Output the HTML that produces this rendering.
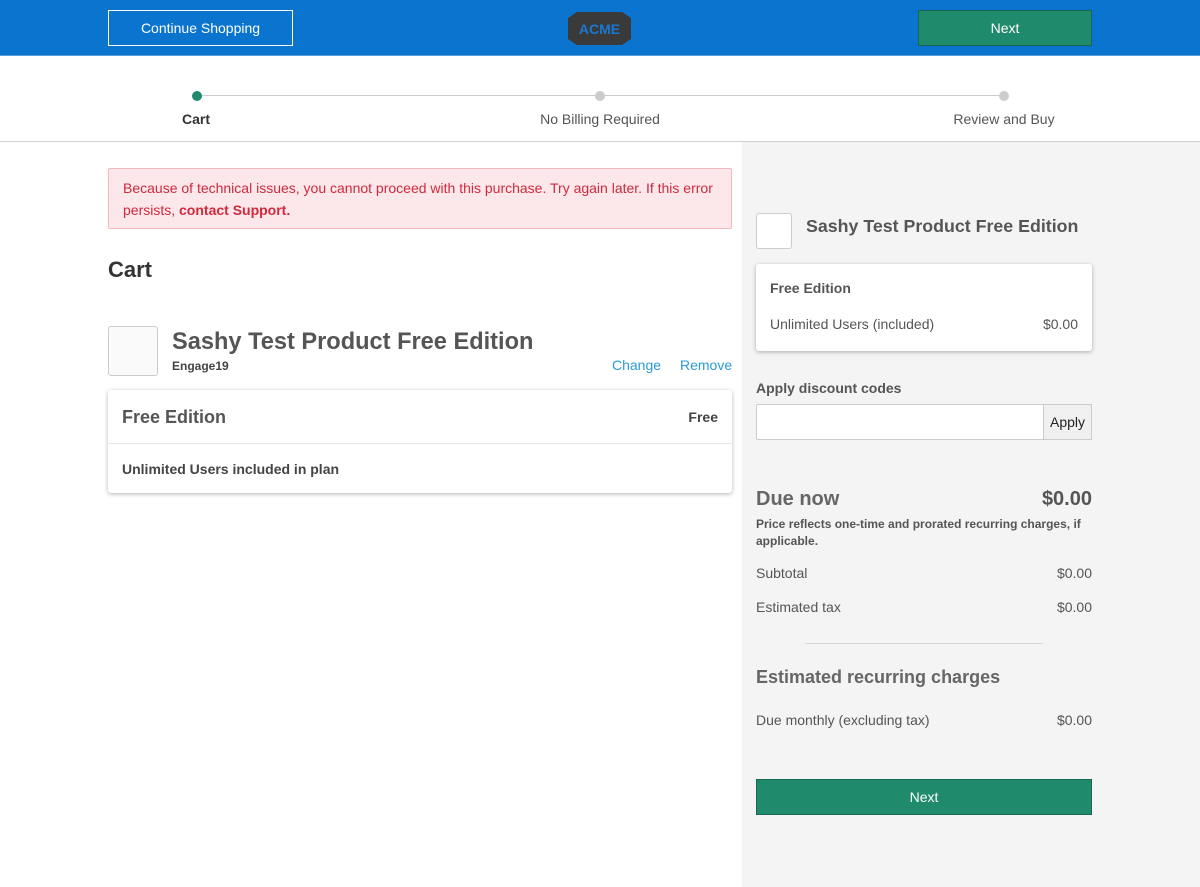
<!DOCTYPE html>
<html><head><meta charset="utf-8"><style>
*{box-sizing:border-box;margin:0;padding:0}
body{width:1200px;height:887px;position:relative;font-family:"Liberation Sans",Arial,sans-serif;color:#4a4a4a;background:#fff;overflow:hidden}
.a{position:absolute}
.hdr{left:0;top:0;width:1200px;height:56px;background:#0a74cf;border-bottom:1px solid #5aa0dc}
.btn{display:flex;align-items:center;justify-content:center;font-size:14px;color:#fff}
.step{font-size:14px;color:#555;text-align:center}
.dot{width:10px;height:10px;border-radius:50%;background:#ccc}
.card{background:#fff;border-radius:3px;box-shadow:0 1px 4px rgba(0,0,0,.3)}
</style></head><body>
<div class="a hdr"></div>
<div class="a btn" style="left:108px;top:10px;width:185px;height:36px;border:1px solid #fff">Continue Shopping</div>
<svg class="a" style="left:567px;top:11px" width="65" height="35" viewBox="0 0 65 35"><polygon points="10,1 55,1 64,7 64,28 55,34 10,34 1,28 1,7" fill="#3a3a3a"/><text x="32.5" y="23" text-anchor="middle" font-family="Liberation Sans" font-weight="bold" font-size="14" fill="#1a78d0">ACME</text></svg>
<div class="a btn" style="left:918px;top:10px;width:174px;height:36px;background:#1f8a6c;border:1px solid #176850">Next</div>

<div class="a" style="left:0;top:141px;width:1200px;height:1px;background:#d0d0d0"></div>
<div class="a" style="left:197px;top:95px;width:807px;height:1px;background:#ccc"></div>
<div class="a dot" style="left:192px;top:91px;background:#1f8a6c"></div>
<div class="a dot" style="left:595px;top:91px"></div>
<div class="a dot" style="left:999px;top:91px"></div>
<div class="a step" style="left:146px;top:111px;width:100px;font-weight:bold;color:#333">Cart</div>
<div class="a step" style="left:500px;top:111px;width:200px">No Billing Required</div>
<div class="a step" style="left:904px;top:111px;width:200px">Review and Buy</div>

<div class="a" style="left:742px;top:142px;width:458px;height:745px;background:#f4f4f4"></div>

<div class="a" style="left:108px;top:168px;width:624px;height:61px;background:#fce8ea;border:1px solid #f4b9bf;border-radius:2px;padding:8px 14px;font-size:14px;line-height:22px;color:#d0293d">Because of technical issues, you cannot proceed with this purchase. Try again later. If this error persists, <b>contact Support.</b></div>
<div class="a" style="left:108px;top:257px;font-size:22px;font-weight:bold;color:#333">Cart</div>
<div class="a" style="left:108px;top:326px;width:50px;height:50px;border:1px solid #ccc;border-radius:3px;background:#fafafa"></div>
<div class="a" style="left:172px;top:329px;font-size:23.6px;font-weight:bold;color:#555">Sashy Test Product Free Edition</div>
<div class="a" style="left:172px;top:359px;font-size:12px;font-weight:bold;color:#444">Engage19</div>
<div class="a" style="left:612px;top:357px;font-size:14px;color:#2a9ad8">Change</div>
<div class="a" style="left:680px;top:357px;font-size:14px;color:#2a9ad8">Remove</div>
<div class="a card" style="left:108px;top:390px;width:624px;height:103px">
<div class="a" style="left:14px;top:17px;font-size:18px;font-weight:bold;color:#555">Free Edition</div>
<div class="a" style="right:14px;top:19px;font-size:14px;font-weight:bold;color:#444">Free</div>
<div class="a" style="left:0;top:53px;width:624px;height:1px;background:#e6e6e6"></div>
<div class="a" style="left:14px;top:71px;font-size:14px;font-weight:bold;color:#444">Unlimited Users included in plan</div>
</div>

<div class="a" style="left:756px;top:213px;width:36px;height:36px;border:1px solid #ccc;border-radius:3px;background:#fff"></div>
<div class="a" style="left:806px;top:216px;font-size:17.8px;font-weight:bold;color:#555">Sashy Test Product Free Edition</div>
<div class="a card" style="left:756px;top:264px;width:336px;height:87px">
<div class="a" style="left:14px;top:16px;font-size:14px;font-weight:bold;color:#555">Free Edition</div>
<div class="a" style="left:14px;top:52px;font-size:14px;color:#555">Unlimited Users (included)</div>
<div class="a" style="right:14px;top:52px;font-size:14px;color:#555">$0.00</div>
</div>
<div class="a" style="left:756px;top:380px;font-size:14px;font-weight:bold;color:#555">Apply discount codes</div>
<div class="a" style="left:756px;top:404px;width:288px;height:36px;background:#fff;border:1px solid #ccc;border-radius:2px 0 0 2px"></div>
<div class="a btn" style="left:1043px;top:404px;width:49px;height:36px;background:#f0f0f0;border:1px solid #ccc;color:#222">Apply</div>
<div class="a" style="left:756px;top:488px;font-size:20px;font-weight:bold;color:#666">Due now</div>
<div class="a" style="right:108px;top:488px;font-size:20px;font-weight:bold;color:#555">$0.00</div>
<div class="a" style="left:756px;top:516px;width:340px;font-size:12px;font-weight:bold;line-height:17px;color:#555">Price reflects one-time and prorated recurring charges, if applicable.</div>
<div class="a" style="left:756px;top:565px;font-size:14px;color:#555">Subtotal</div>
<div class="a" style="right:108px;top:565px;font-size:14px;color:#555">$0.00</div>
<div class="a" style="left:756px;top:599px;font-size:14px;color:#555">Estimated tax</div>
<div class="a" style="right:108px;top:599px;font-size:14px;color:#555">$0.00</div>
<div class="a" style="left:805px;top:643px;width:238px;height:1px;background:#d8d8d8"></div>
<div class="a" style="left:756px;top:667px;font-size:18px;font-weight:bold;color:#666">Estimated recurring charges</div>
<div class="a" style="left:756px;top:712px;font-size:14px;color:#555">Due monthly (excluding tax)</div>
<div class="a" style="right:108px;top:712px;font-size:14px;color:#555">$0.00</div>
<div class="a btn" style="left:756px;top:779px;width:336px;height:36px;background:#1f8a6c;border:1px solid #176850">Next</div>
</body></html>
